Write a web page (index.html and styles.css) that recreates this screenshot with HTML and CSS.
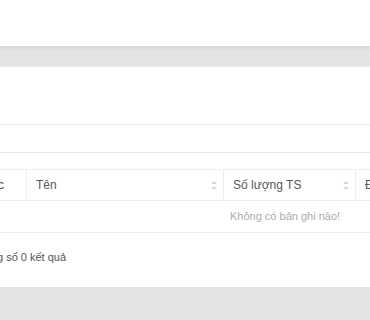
FILE: index.html
```html
<!DOCTYPE html>
<html lang="vi">
<head>
    <meta charset="UTF-8">
    <title>Danh sách tài sản</title>
    <link rel="stylesheet" href="styles.css">
</head>
<body>
    <div class="top-panel"></div>

    <div class="card">
        <div class="toolbar"></div>

        <div class="table">
            <div class="row head">
                <div class="cell col-code"><span>Mã lớp học</span></div>
                <div class="cell col-name">Tên <span class="sort"></span></div>
                <div class="cell col-qty">Số lượng TS <span class="sort"></span></div>
                <div class="cell col-more">Đơn vị</div>
            </div>
            <div class="row empty">
                <div class="empty-text">Không có bản ghi nào!</div>
            </div>
        </div>

        <div class="summary">Tổng số 0 kết quả</div>
    </div>
</body>
</html>
```

FILE: styles.css
```css
body {
    margin: 0;
    background: #e4e4e4;
    font-family: "Liberation Sans", Arial, sans-serif;
    font-size: 12px;
    color: #606266;
    overflow: hidden;
}
.top-panel {
    height: 46px;
    background: #fff;
    box-shadow: 0 2px 4px rgba(0, 0, 0, 0.06);
}
.card {
    margin: 20px -60px 0;
    padding-top: 57px;
    background: #fff;
    height: 163px;
    border-top: 1px solid #ececec;
}
.toolbar {
    height: 27px;
    border-top: 1px solid #e8e8ec;
    border-bottom: 1px solid #e8e8ec;
}
.table {
    margin-top: 16px;
    border-top: 1px solid #ebeef5;
}
.row {
    display: flex;
    border-bottom: 1px solid #ebeef5;
}
.head .cell {
    flex-shrink: 0;
    height: 30px;
    line-height: 31px;
    padding: 0 9px;
    box-sizing: border-box;
    position: relative;
    white-space: nowrap;
    color: #55575e;
}
.col-code {
    width: 87px;
    border-right: 1px solid #ebeef5;
}
.head .col-code {
    display: flex;
    justify-content: flex-end;
    padding-right: 22px;
}
.col-name {
    width: 197px;
    border-right: 1px solid #ebeef5;
}
.col-qty {
    width: 132px;
    border-right: 1px solid #ebeef5;
}
.col-more {
    width: 120px;
}
.sort {
    position: absolute;
    right: 6px;
    top: 11px;
    width: 6px;
    height: 9px;
}
.sort::before,
.sort::after {
    content: "";
    position: absolute;
    left: 0;
    border-left: 3px solid transparent;
    border-right: 3px solid transparent;
}
.sort::before {
    top: 0;
    border-bottom: 3px solid #d4d6db;
}
.sort::after {
    bottom: 0;
    border-top: 3px solid #d4d6db;
}
.empty {
    height: 31px;
    line-height: 31px;
}
.empty-text {
    padding-left: 290px;
    font-size: 11px;
    color: #a8abb2;
}
.summary {
    padding: 18px 0 0 38px;
    font-size: 11px;
    color: #555;
}
```
